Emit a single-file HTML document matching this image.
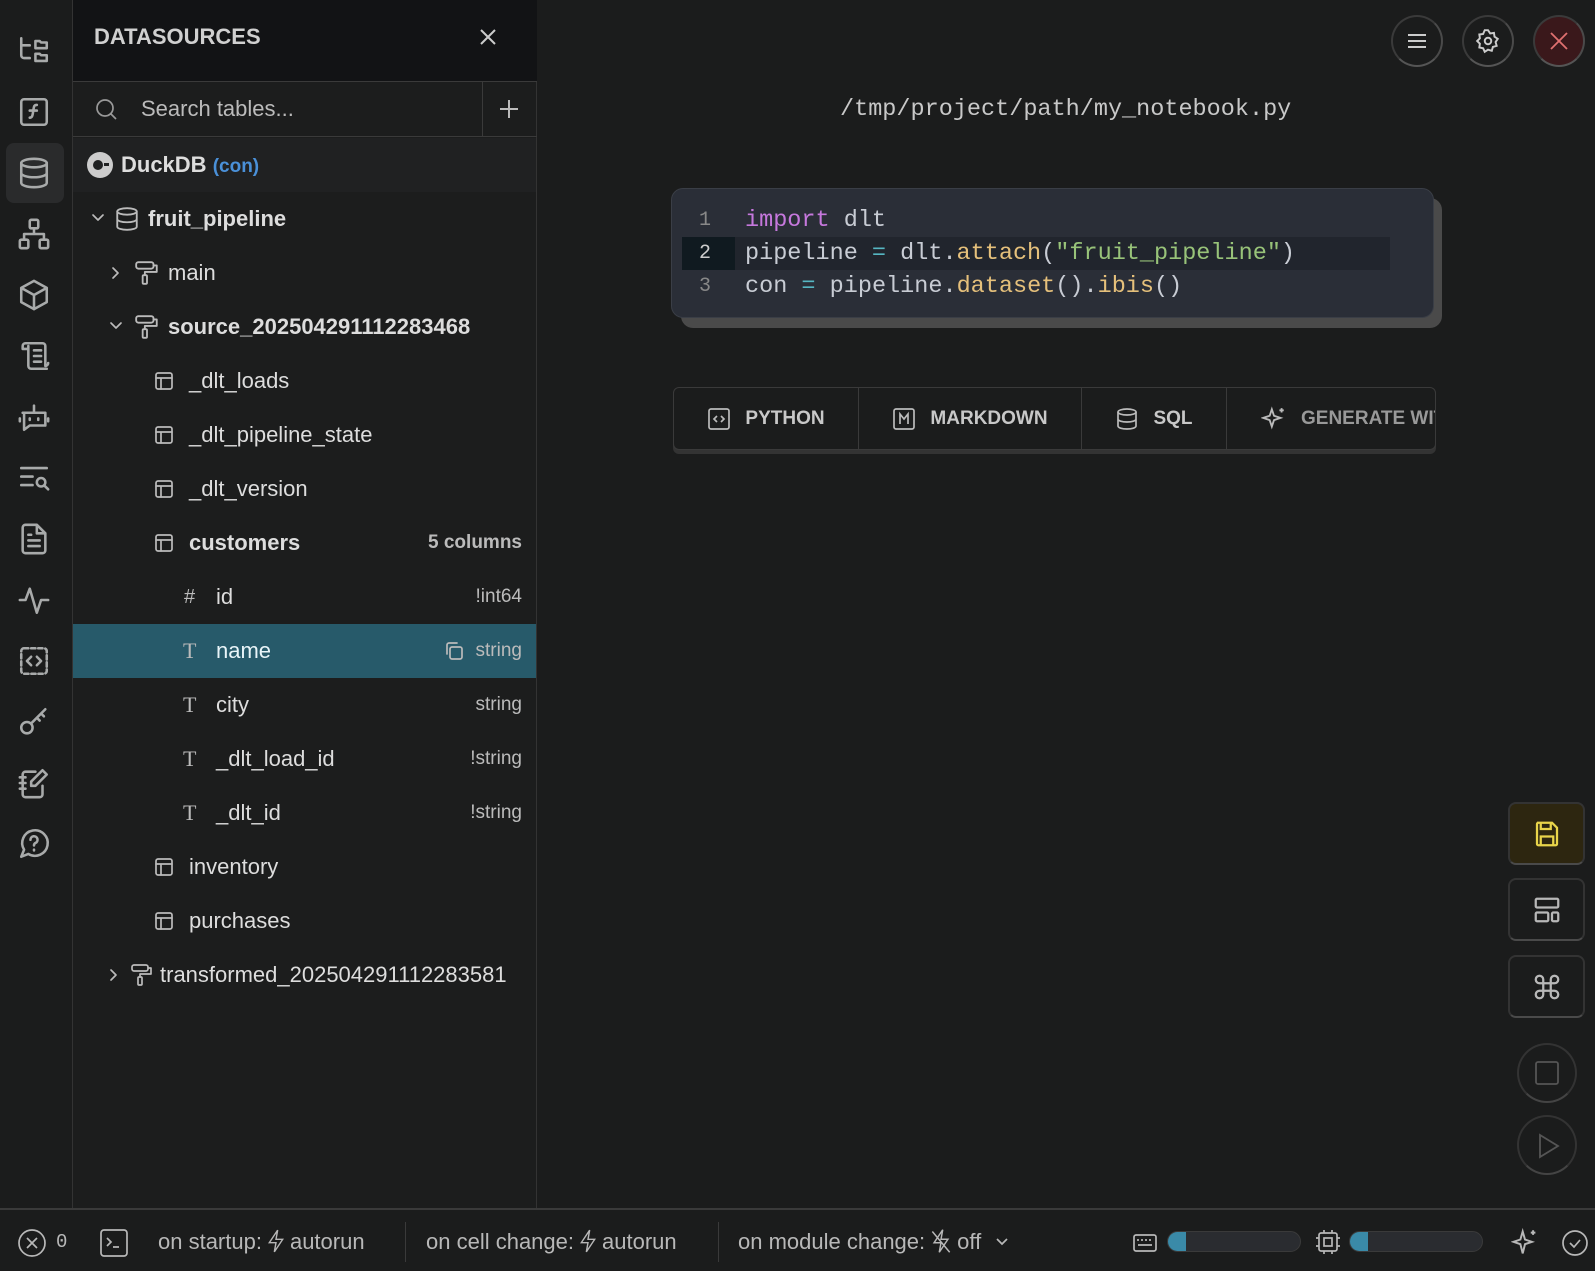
<!DOCTYPE html>
<html><head><meta charset="utf-8"><style>
*{margin:0;padding:0;box-sizing:border-box}
body{width:1595px;height:1271px;background:#1b1c1c;font-family:"Liberation Sans",sans-serif;color:#d4d4d4;position:relative;overflow:hidden}
.abs{position:absolute}
.side{left:0;top:0;width:73px;height:1209px;border-right:1px solid #333}
.si{position:absolute;left:17px;width:34px;height:34px}
.si svg{width:34px;height:34px;fill:none;stroke:#a8aaaa;stroke-width:1.8;stroke-linecap:round;stroke-linejoin:round}
.panel{left:73px;top:0;width:464px;height:1209px;border-right:1px solid #333;background:#1c1d1d}
.hdr{position:absolute;left:0;top:0;width:464px;height:82px;background:#121315;border-bottom:1px solid #3a3a3a}
.row{position:absolute;left:0;width:463px;height:54px;font-size:22px;line-height:54px;white-space:nowrap}
.row svg{position:absolute;fill:none;stroke:#bbb;stroke-width:1.7;stroke-linecap:round;stroke-linejoin:round}
.r{position:absolute;right:14px;font-size:19px;color:#bbb}
.tb{position:absolute;width:52px;height:52px;border-radius:50%;border:2px solid #3a3a3a;border-bottom-color:#555;border-right-color:#4a4a4a}
.code{font-family:"Liberation Mono",monospace;font-size:23.5px}
.btn{position:absolute;top:0;height:62px;display:flex;align-items:center;justify-content:center;gap:14px;font-weight:bold;font-size:19px;color:#c8c8c8;border-right:1px solid #3a3a3a;white-space:nowrap}
.btn svg{fill:none;stroke:#bbb;stroke-width:1.7}
.rb{position:absolute;left:1508px;width:77px;height:63px;border-radius:8px;border:2px solid #333;border-bottom-color:#4a4a4a;display:flex;align-items:center;justify-content:center}
.rb svg{fill:none;stroke:#b8b8b8;stroke-width:1.8}
.status{left:0;top:1208px;width:1595px;height:63px;border-top:2px solid #3a3a3a;font-size:22px;color:#b8b8b8}
.status>span{position:absolute;top:18px;white-space:nowrap;line-height:28px}
.status svg{fill:none;stroke:#b8b8b8;stroke-width:1.7}
.status>svg{position:absolute}
.status span svg{vertical-align:-5px;margin:0 4px}
</style></head><body>

<div class="abs side">
  <div class="si" style="top:34px"><svg viewBox="0 0 24 24"><path d="M3 3v12a2 2 0 0 0 2 2h4M3 8h6M13 5h3l1 1h4v4h-8zM13 14h3l1 1h4v4h-8z"/></svg></div>
  <div class="si" style="top:95px"><svg viewBox="0 0 24 24"><rect x="3" y="3" width="18" height="18" rx="2"/><path d="M14 7c-2 0-2 1-2.5 4s-.5 5-2.5 5M9 11h5"/></svg></div>
  <div style="position:absolute;left:6px;top:143px;width:58px;height:60px;background:#2a2b2c;border-radius:8px"></div>
  <div class="si" style="top:156px"><svg viewBox="0 0 24 24"><ellipse cx="12" cy="5" rx="9" ry="3"/><path d="M3 5v14c0 1.7 4 3 9 3s9-1.3 9-3V5M3 12c0 1.7 4 3 9 3s9-1.3 9-3"/></svg></div>
  <div class="si" style="top:217px"><svg viewBox="0 0 24 24"><rect x="9" y="2" width="6" height="6" rx="1"/><rect x="2" y="16" width="6" height="6" rx="1"/><rect x="16" y="16" width="6" height="6" rx="1"/><path d="M12 8v4M5 16v-4h14v4"/></svg></div>
  <div class="si" style="top:278px"><svg viewBox="0 0 24 24"><path d="M12 2l9 5v10l-9 5-9-5V7zM3 7l9 5 9-5M12 12v10"/></svg></div>
  <div class="si" style="top:339px"><svg viewBox="0 0 24 24"><path d="M6 3h12a2 2 0 0 1 2 2v14a2 2 0 0 0 2-2M6 3a2 2 0 0 0-2 2v2h4M8 5v14a2 2 0 0 0 2 2h11M12 8h5M12 12h5M12 16h5"/></svg></div>
  <div class="si" style="top:400px"><svg viewBox="0 0 24 24"><path d="M12 4v4M4 9h16v9H9l-4 3V9zM2 13v2M22 13v2M9 13v1M15 13v1"/></svg></div>
  <div class="si" style="top:461px"><svg viewBox="0 0 24 24"><path d="M3 5h18M3 11h8M3 17h8"/><circle cx="17" cy="15" r="3"/><path d="M19.5 17.5L22 20"/></svg></div>
  <div class="si" style="top:522px"><svg viewBox="0 0 24 24"><path d="M14 2H6a2 2 0 0 0-2 2v16a2 2 0 0 0 2 2h12a2 2 0 0 0 2-2V8zM14 2v6h6M8 13h8M8 17h8M8 9h2"/></svg></div>
  <div class="si" style="top:583px"><svg viewBox="0 0 24 24"><path d="M2 12h4l3-8 5 17 3-9h5"/></svg></div>
  <div class="si" style="top:644px"><svg viewBox="0 0 24 24"><rect x="3" y="3" width="18" height="18" rx="2" stroke-dasharray="3 2"/><path d="M10 9l-3 3 3 3M14 9l3 3-3 3"/></svg></div>
  <div class="si" style="top:705px"><svg viewBox="0 0 24 24"><circle cx="7" cy="16" r="4"/><path d="M10 13l10-10M17 6l2 2M14 9l2 2"/></svg></div>
  <div class="si" style="top:766px"><svg viewBox="0 0 24 24"><path d="M13 4H6a2 2 0 0 0-2 2v14a2 2 0 0 0 2 2h10a2 2 0 0 0 2-2v-6M2 8h4M2 12h4M2 16h4M18 3l3 3-8 8h-3v-3z"/></svg></div>
  <div class="si" style="top:827px"><svg viewBox="0 0 24 24"><path d="M3 21l2-5a9 9 0 1 1 3 3z"/><path d="M9.5 9a2.5 2.5 0 1 1 3.5 2.3c-.7.4-1 1-1 1.7M12 16v.5"/></svg></div>
</div>

<div class="abs panel">
  <div class="hdr">
    <div style="position:absolute;left:21px;top:24px;font-size:22px;font-weight:bold;color:#d0d0d0">DATASOURCES</div>
    <svg style="position:absolute;left:406px;top:28px" width="18" height="18" viewBox="0 0 18 18"><path d="M2 2l14 14M16 2L2 16" stroke="#ccc" stroke-width="2"/></svg>
  </div>
  <div style="position:absolute;left:0;top:82px;width:464px;height:55px;border-bottom:1px solid #3a3a3a">
    <svg style="position:absolute;left:22px;top:16px" width="24" height="24" viewBox="0 0 24 24"><circle cx="10" cy="10" r="8" fill="none" stroke="#999" stroke-width="1.7"/><path d="M16 16l5 5" stroke="#999" stroke-width="1.7"/></svg>
    <div style="position:absolute;left:68px;top:14px;font-size:22px;color:#bbb">Search tables...</div>
    <div style="position:absolute;left:409px;top:0;width:1px;height:55px;background:#3a3a3a"></div>
    <svg style="position:absolute;left:426px;top:17px" width="20" height="20" viewBox="0 0 20 20"><path d="M10 1v18M1 10h18" stroke="#bbb" stroke-width="2"/></svg>
  </div>
  <div class="row" style="top:138px;background:#202122">
    <svg style="left:14px;top:14px" width="26" height="26" viewBox="0 0 26 26"><circle cx="13" cy="13" r="13" fill="#ccc" stroke="none"/><circle cx="11" cy="13" r="5" fill="#202122" stroke="none"/><rect x="17" y="11" width="5" height="3" fill="#202122" stroke="none"/></svg>
    <span style="position:absolute;left:48px;font-weight:bold;color:#ddd">DuckDB <span style="color:#4a90d8;font-size:19px">(con)</span></span>
  </div>
  <div class="row" style="top:192px">
    <svg style="left:18px;top:21px" width="14" height="10" viewBox="0 0 14 10"><path d="M2 2l5 5 5-5"/></svg>
    <svg style="left:41px;top:14px" width="26" height="26" viewBox="0 0 24 24"><ellipse cx="12" cy="5" rx="9" ry="3"/><path d="M3 5v14c0 1.7 4 3 9 3s9-1.3 9-3V5M3 12c0 1.7 4 3 9 3s9-1.3 9-3"/></svg>
    <span style="position:absolute;left:75px;font-weight:bold;color:#ddd">fruit_pipeline</span>
  </div>
  <div class="row" style="top:246px">
    <svg style="left:38px;top:20px" width="10" height="14" viewBox="0 0 10 14"><path d="M2 2l5 5-5 5"/></svg>
    <svg style="left:61px;top:14px" width="26" height="26" viewBox="0 0 24 24"><rect x="2" y="2" width="16" height="6" rx="2"/><path d="M18 5h3v6H10v3"/><rect x="8" y="14" width="4" height="8" rx="1"/></svg>
    <span style="position:absolute;left:95px;color:#ddd">main</span>
  </div>
  <div class="row" style="top:300px">
    <svg style="left:36px;top:21px" width="14" height="10" viewBox="0 0 14 10"><path d="M2 2l5 5 5-5"/></svg>
    <svg style="left:61px;top:14px" width="26" height="26" viewBox="0 0 24 24"><rect x="2" y="2" width="16" height="6" rx="2"/><path d="M18 5h3v6H10v3"/><rect x="8" y="14" width="4" height="8" rx="1"/></svg>
    <span style="position:absolute;left:95px;font-weight:bold;color:#ddd">source_202504291112283468</span>
  </div>
  <div class="row" style="top:354px"><svg style="left:82px;top:18px" width="18" height="18" viewBox="0 0 18 18"><rect x="1" y="1" width="16" height="16" rx="2"/><path d="M1 6h16M6 6v11"/></svg><span style="position:absolute;left:116px;color:#ddd">_dlt_loads</span></div>
  <div class="row" style="top:408px"><svg style="left:82px;top:18px" width="18" height="18" viewBox="0 0 18 18"><rect x="1" y="1" width="16" height="16" rx="2"/><path d="M1 6h16M6 6v11"/></svg><span style="position:absolute;left:116px;color:#ddd">_dlt_pipeline_state</span></div>
  <div class="row" style="top:462px"><svg style="left:82px;top:18px" width="18" height="18" viewBox="0 0 18 18"><rect x="1" y="1" width="16" height="16" rx="2"/><path d="M1 6h16M6 6v11"/></svg><span style="position:absolute;left:116px;color:#ddd">_dlt_version</span></div>
  <div class="row" style="top:516px"><svg style="left:82px;top:18px" width="18" height="18" viewBox="0 0 18 18"><rect x="1" y="1" width="16" height="16" rx="2"/><path d="M1 6h16M6 6v11"/></svg><span style="position:absolute;left:116px;font-weight:bold;color:#ddd">customers</span><span class="r" style="font-weight:bold">5 columns</span></div>
  <div class="row" style="top:570px"><span style="position:absolute;left:111px;color:#bbb;font-size:20px">#</span><span style="position:absolute;left:143px;color:#ddd">id</span><span class="r">!int64</span></div>
  <div class="row" style="top:624px;background:#275a6a"><span style="position:absolute;left:110px;color:#bbb;font-family:'Liberation Serif',serif">T</span><span style="position:absolute;left:143px;color:#e8f4f8">name</span><svg style="left:371px;top:17px" width="20" height="20" viewBox="0 0 20 20"><rect x="6" y="6" width="12" height="12" rx="2"/><path d="M3 13V4a2 2 0 0 1 2-2h8"/></svg><span class="r">string</span></div>
  <div class="row" style="top:678px"><span style="position:absolute;left:110px;color:#bbb;font-family:'Liberation Serif',serif">T</span><span style="position:absolute;left:143px;color:#ddd">city</span><span class="r">string</span></div>
  <div class="row" style="top:732px"><span style="position:absolute;left:110px;color:#bbb;font-family:'Liberation Serif',serif">T</span><span style="position:absolute;left:143px;color:#ddd">_dlt_load_id</span><span class="r">!string</span></div>
  <div class="row" style="top:786px"><span style="position:absolute;left:110px;color:#bbb;font-family:'Liberation Serif',serif">T</span><span style="position:absolute;left:143px;color:#ddd">_dlt_id</span><span class="r">!string</span></div>
  <div class="row" style="top:840px"><svg style="left:82px;top:18px" width="18" height="18" viewBox="0 0 18 18"><rect x="1" y="1" width="16" height="16" rx="2"/><path d="M1 6h16M6 6v11"/></svg><span style="position:absolute;left:116px;color:#ddd">inventory</span></div>
  <div class="row" style="top:894px"><svg style="left:82px;top:18px" width="18" height="18" viewBox="0 0 18 18"><rect x="1" y="1" width="16" height="16" rx="2"/><path d="M1 6h16M6 6v11"/></svg><span style="position:absolute;left:116px;color:#ddd">purchases</span></div>
  <div class="row" style="top:948px">
    <svg style="left:36px;top:20px" width="10" height="14" viewBox="0 0 10 14"><path d="M2 2l5 5-5 5"/></svg>
    <svg style="left:57px;top:15px" width="24" height="24" viewBox="0 0 24 24"><rect x="2" y="2" width="16" height="6" rx="2"/><path d="M18 5h3v6H10v3"/><rect x="8" y="14" width="4" height="8" rx="1"/></svg>
    <span style="position:absolute;left:87px;color:#ddd">transformed_202504291112283581</span>
  </div>
</div>

<div class="tb" style="left:1391px;top:15px"><svg style="position:absolute;left:13px;top:13px" width="22" height="22" viewBox="0 0 22 22"><path d="M2 5h18M2 11h18M2 17h18" stroke="#ccc" stroke-width="2"/></svg></div>
<div class="tb" style="left:1462px;top:15px"><svg style="position:absolute;left:11px;top:11px" width="26" height="26" viewBox="0 0 24 24" fill="none" stroke="#ccc" stroke-width="1.8"><path d="M12 2l2 3 3.5-.5.5 3.5 3 2-2 3 1 3.5-3.5 1-1 3.5-3.5-1L9 22l-1.5-3.3L4 18l.5-3.5-2.5-2.5 2.5-2.5L4 6l3.5-.5L9 2z"/><circle cx="12" cy="12" r="3"/></svg></div>
<div class="tb" style="left:1533px;top:15px;background:#3a181b"><svg style="position:absolute;left:14px;top:14px" width="20" height="20" viewBox="0 0 20 20"><path d="M2 2l16 16M18 2L2 18" stroke="#e07070" stroke-width="1.8"/></svg></div>

<div class="abs code" style="left:840px;top:96px;color:#c8c8c8">/tmp/project/path/my_notebook.py</div>

<div class="abs" style="left:681px;top:198px;width:761px;height:130px;background:#4a4a4a;border-radius:12px"></div>
<div class="abs code" style="left:671px;top:188px;width:763px;height:130px;background:#2a2e37;border-radius:12px;border:1px solid #3a3e46">
  <div style="position:absolute;left:10px;top:48px;width:708px;height:33px;background:#21252d"></div>
  <div style="position:absolute;left:10px;top:48px;width:53px;height:33px;background:#101a20"></div>
  <div style="position:absolute;left:27px;top:15px;line-height:33px;color:#888;font-size:20px">1<br><span style="color:#ccc">2</span><br>3</div>
  <div style="position:absolute;left:73px;top:15px;line-height:33px;color:#c8ccd4;white-space:pre"><span style="color:#c678dd">import</span> dlt
pipeline <span style="color:#56b6c2">=</span> dlt.<span style="color:#e5c07b">attach</span>(<span style="color:#98c379">"fruit_pipeline"</span>)
con <span style="color:#56b6c2">=</span> pipeline.<span style="color:#e5c07b">dataset</span>().<span style="color:#e5c07b">ibis</span>()</div>
</div>

<div class="abs" style="left:673px;top:387px;width:763px;height:63px;border:1px solid #3a3a3a;border-radius:6px;background:#1b1c1c;box-shadow:0 4px 0 #333;overflow:hidden">
  <div class="btn" style="left:0;width:185px"><svg width="24" height="24" viewBox="0 0 24 24"><rect x="2" y="2" width="20" height="20" rx="2"/><path d="M10 9l-3 3 3 3M14 9l3 3-3 3"/></svg>PYTHON</div>
  <div class="btn" style="left:185px;width:223px"><svg width="24" height="24" viewBox="0 0 24 24"><rect x="2" y="2" width="20" height="20" rx="2"/><path d="M8 17V7l4 5 4-5v10"/></svg>MARKDOWN</div>
  <div class="btn" style="left:408px;width:145px"><svg width="24" height="26" viewBox="0 0 24 24"><ellipse cx="12" cy="5" rx="9" ry="3"/><path d="M3 5v14c0 1.7 4 3 9 3s9-1.3 9-3V5M3 12c0 1.7 4 3 9 3s9-1.3 9-3"/></svg>SQL</div>
  <div class="btn" style="left:553px;width:260px;justify-content:flex-start;padding-left:34px;color:#999;border:none"><svg width="26" height="26" viewBox="0 0 24 24"><path d="M10 3l2 6 6 2-6 2-2 6-2-6-6-2 6-2zM19 2v4M17 4h4"/></svg>GENERATE WITH AI</div>
</div>

<div class="rb" style="top:802px;background:#2d2610"><svg width="30" height="30" viewBox="0 0 24 24" style="stroke:#e8d44a"><path d="M4 3h12l4 4v13a1 1 0 0 1-1 1H5a1 1 0 0 1-1-1V4a1 1 0 0 1 1-1zM7 3v5h8V3M7 21v-7h10v7"/></svg></div>
<div class="rb" style="top:878px"><svg width="30" height="30" viewBox="0 0 24 24"><rect x="3" y="3" width="18" height="7" rx="1"/><rect x="3" y="14" width="10" height="7" rx="1"/><rect x="16" y="14" width="5" height="7" rx="1"/></svg></div>
<div class="rb" style="top:955px"><svg width="30" height="30" viewBox="0 0 24 24"><path d="M9 9V6a3 3 0 1 0-3 3h12a3 3 0 1 0-3-3v12a3 3 0 1 0 3-3H6a3 3 0 1 0 3 3z"/></svg></div>
<div class="abs" style="left:1517px;top:1043px;width:60px;height:60px;border-radius:50%;border:2px solid #333;border-bottom-color:#444"><svg style="position:absolute;left:16px;top:16px" width="24" height="24" viewBox="0 0 24 24"><rect x="1" y="1" width="22" height="22" rx="2" fill="none" stroke="#555" stroke-width="1.8"/></svg></div>
<div class="abs" style="left:1517px;top:1115px;width:60px;height:60px;border-radius:50%;border:2px solid #333;border-bottom-color:#444"><svg style="position:absolute;left:18px;top:16px" width="24" height="26" viewBox="0 0 24 26"><path d="M3 2l18 11L3 24z" fill="none" stroke="#555" stroke-width="1.8"/></svg></div>

<div class="abs status">
  <svg style="left:17px;top:18px" width="30" height="30" viewBox="0 0 30 30"><circle cx="15" cy="15" r="13"/><path d="M10 10l10 10M20 10L10 20"/></svg>
  <span style="left:56px;font-family:'Liberation Mono',monospace;font-size:19px">0</span>
  <svg style="left:99px;top:18px" width="30" height="30" viewBox="0 0 30 30"><rect x="2" y="2" width="26" height="26" rx="3"/><path d="M8 10l4 4-4 4M14 19h6"/></svg>
  <span style="left:158px">on startup:<svg width="20" height="26" viewBox="0 0 24 30"><path d="M14 2L4 17h8l-2 11 10-15h-8z"/></svg>autorun</span>
  <div style="position:absolute;left:405px;top:12px;width:1px;height:40px;background:#3a3a3a"></div>
  <span style="left:426px">on cell change:<svg width="20" height="26" viewBox="0 0 24 30"><path d="M14 2L4 17h8l-2 11 10-15h-8z"/></svg>autorun</span>
  <div style="position:absolute;left:718px;top:12px;width:1px;height:40px;background:#3a3a3a"></div>
  <span style="left:738px">on module change:<svg width="24" height="26" viewBox="0 0 26 30"><path d="M15 2L5 17h8l-2 11 10-15h-8zM3 4l20 24"/></svg>off <svg width="14" height="10" viewBox="0 0 14 10" style="vertical-align:2px;margin-left:8px"><path d="M2 2l5 5 5-5"/></svg></span>
  <svg style="left:1132px;top:21px" width="26" height="24" viewBox="0 0 26 24"><rect x="2" y="4" width="22" height="16" rx="2"/><path d="M6 8v2M10 8v2M14 8v2M18 8v2M6 14h14"/></svg>
  <div style="position:absolute;left:1167px;top:21px;width:134px;height:21px;border-radius:11px;background:#2a2c30;border:1px solid #3a3a3a;overflow:hidden"><div style="width:18px;height:21px;background:#3a8aa8"></div></div>
  <svg style="left:1314px;top:18px" width="28" height="28" viewBox="0 0 28 28"><rect x="5" y="5" width="18" height="18" rx="2"/><rect x="10" y="10" width="8" height="8"/><path d="M10 2v3M18 2v3M10 23v3M18 23v3M2 10h3M2 18h3M23 10h3M23 18h3"/></svg>
  <div style="position:absolute;left:1349px;top:21px;width:134px;height:21px;border-radius:11px;background:#2a2c30;border:1px solid #3a3a3a;overflow:hidden"><div style="width:18px;height:21px;background:#3a8aa8"></div></div>
  <svg style="left:1511px;top:18px" width="28" height="30" viewBox="0 0 24 26"><path d="M10 3l2 7 6 2-6 2-2 8-2-8-6-2 6-2zM19 2v4M17 4h4"/></svg>
  <svg style="left:1561px;top:19px" width="28" height="28" viewBox="0 0 28 28"><circle cx="14" cy="14" r="12"/><path d="M9 14l4 4 6-7"/></svg>
</div>
</body></html>
